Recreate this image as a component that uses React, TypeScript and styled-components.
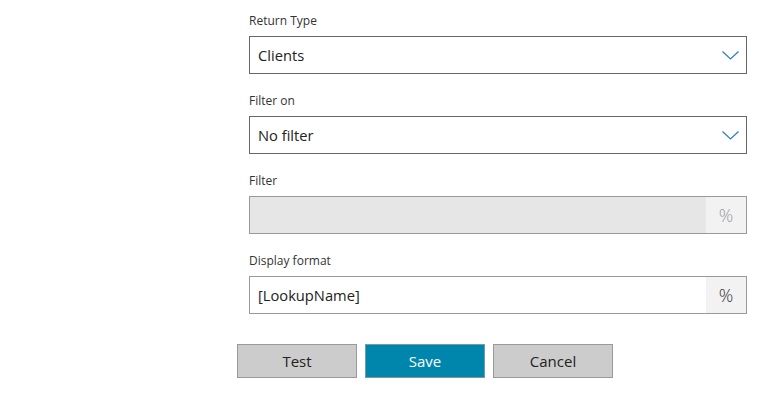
import React from 'react';
import styled, { createGlobalStyle } from 'styled-components';

const GlobalStyle = createGlobalStyle`
  html, body {
    margin: 0;
    padding: 0;
    background: #ffffff;
    font-family: "Open Sans", "Noto Sans", "Liberation Sans", sans-serif;
  }
`;

const Page = styled.div`
  width: 771px;
  padding-top: 13px;
  box-sizing: border-box;
`;

const Form = styled.div`
  margin-left: 249px;
  width: 498px;
  display: flex;
  flex-direction: column;
  gap: 19px;
`;

const Field = styled.div`
  display: flex;
  flex-direction: column;
  gap: 7px;
`;

const Label = styled.label`
  font-size: 12px;
  line-height: 16px;
  color: #333333;
`;

const Box = styled.div<{ $disabled?: boolean; $strong?: boolean }>`
  height: 38px;
  box-sizing: border-box;
  display: flex;
  align-items: stretch;
  border: 1px solid ${(p) => (p.$strong ? '#666666' : '#999999')};
  background: ${(p) => (p.$disabled ? '#e6e6e6' : '#ffffff')};
`;

const Value = styled.div`
  flex: 1;
  display: flex;
  align-items: center;
  padding-left: 8px;
  font-size: 14.7px;
  color: #222222;
`;

const Chevron = styled.div`
  width: 31px;
  display: flex;
  align-items: center;
  justify-content: center;
`;

const Addon = styled.div<{ $disabled?: boolean }>`
  width: 40px;
  display: flex;
  align-items: center;
  justify-content: center;
  background: #f2f2f2;
  font-size: 18px;
  font-weight: 300;
  color: ${(p) => (p.$disabled ? '#9a9a9a' : '#333333')};
`;

const Footer = styled.div`
  margin-top: 30px;
  margin-left: 237px;
  display: flex;
  gap: 8px;
`;

const Button = styled.button<{ $primary?: boolean }>`
  width: 120px;
  height: 34px;
  box-sizing: border-box;
  border: 1px solid ${(p) => (p.$primary ? '#7a9aa6' : '#999999')};
  background: ${(p) => (p.$primary ? '#0085ad' : '#cccccc')};
  color: ${(p) => (p.$primary ? '#ffffff' : '#222222')};
  font-family: inherit;
  font-size: 15px;
  padding: 0;
  cursor: pointer;
`;

const ChevronIcon = () => (
  <svg width="17" height="9" viewBox="0 0 17 9">
    <polyline points="0.5,0.5 8.5,8 16.5,0.5" fill="none" stroke="#2a7bc4" strokeWidth="1.2" />
  </svg>
);

const App: React.FC = () => (
  <>
    <GlobalStyle />
    <Page>
      <Form>
        <Field>
          <Label>Return Type</Label>
          <Box $strong>
            <Value>Clients</Value>
            <Chevron><ChevronIcon /></Chevron>
          </Box>
        </Field>
        <Field>
          <Label>Filter on</Label>
          <Box $strong>
            <Value>No filter</Value>
            <Chevron><ChevronIcon /></Chevron>
          </Box>
        </Field>
        <Field>
          <Label>Filter</Label>
          <Box $disabled>
            <Value />
            <Addon $disabled>%</Addon>
          </Box>
        </Field>
        <Field>
          <Label>Display format</Label>
          <Box>
            <Value>[LookupName]</Value>
            <Addon>%</Addon>
          </Box>
        </Field>
      </Form>
      <Footer>
        <Button>Test</Button>
        <Button $primary>Save</Button>
        <Button>Cancel</Button>
      </Footer>
    </Page>
  </>
);

export default App;
